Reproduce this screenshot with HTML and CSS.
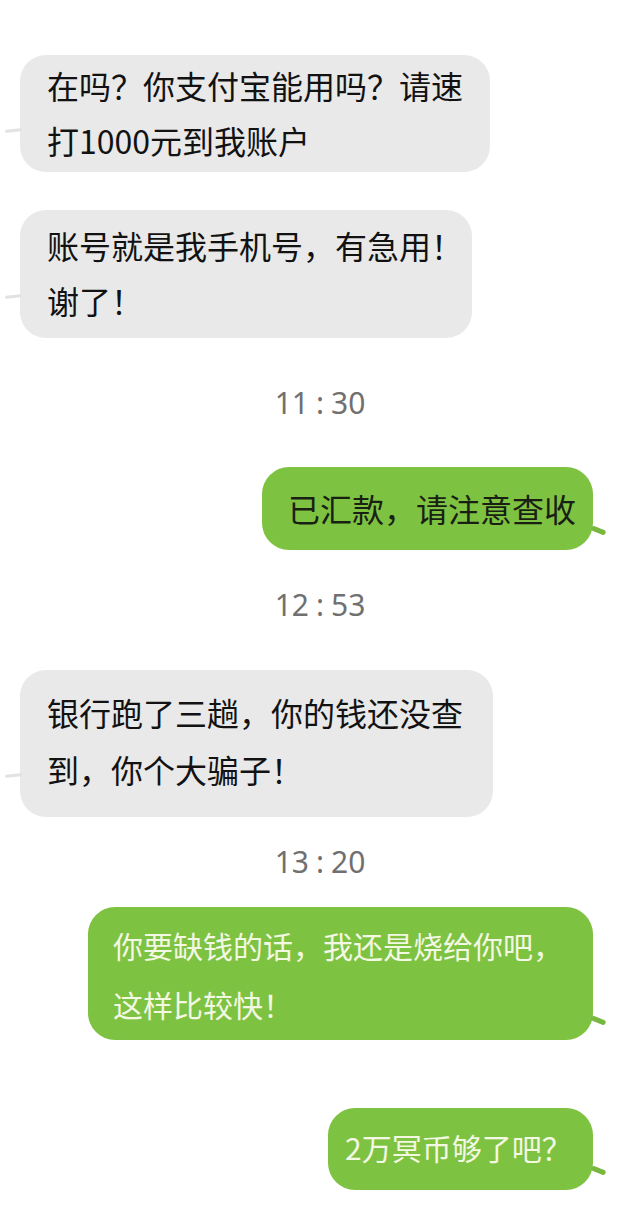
FILE: index.html
```html
<!DOCTYPE html>
<html lang="zh-CN">
<head>
<meta charset="utf-8">
<title>聊天记录</title>
<link rel="stylesheet" href="styles.css">
</head>
<body>
<main class="chat">
  <div class="msg in b1">在吗？你支付宝能用吗？请速<br>打1000元到我账户</div>
  <div class="msg in b2">账号就是我手机号，有急用！<br>谢了！</div>
  <div class="time t1">11<span class="colon">:</span>30</div>
  <div class="msg out dark g1">已汇款，请注意查收</div>
  <div class="time t2">12<span class="colon">:</span>53</div>
  <div class="msg in b3">银行跑了三趟，你的钱还没查<br>到，你个大骗子！</div>
  <div class="time t3">13<span class="colon">:</span>20</div>
  <div class="msg out light g2">你要缺钱的话，我还是烧给你吧，<br>这样比较快！</div>
  <div class="msg out light g3">2万冥币够了吧？</div>
</main>
</body>
</html>
```

FILE: styles.css
```css
html, body {
  margin: 0;
  padding: 0;
  background: #ffffff;
}

.chat {
  width: 640px;
  height: 1231px;
  display: flex;
  flex-direction: column;
  align-items: flex-start;
  font-family: "Noto Sans CJK SC", "Noto Sans", sans-serif;
  box-sizing: border-box;
  padding-top: 55px;
}

.msg {
  position: relative;
  box-sizing: border-box;
  font-size: 32px;
  line-height: 55px;
  white-space: nowrap;
}

.msg.in {
  margin-left: 20px;
  background: #e9e9e9;
  color: #121212;
  border-radius: 26px;
  padding-left: 27px;
}

.msg.in::before {
  content: "";
  position: absolute;
  left: -15px;
  bottom: 40px;
  width: 17px;
  height: 3px;
  border-radius: 2px;
  background: #e2e2e2;
  transform: rotate(-6deg);
}

.msg.out {
  align-self: flex-end;
  margin-right: 47px;
  background: #7ec242;
  border-radius: 27px;
}

.msg.out::after {
  content: "";
  position: absolute;
  right: -13px;
  bottom: 17px;
  width: 15px;
  height: 5px;
  border-radius: 3px;
  background: #78b83f;
  transform: rotate(22deg);
}

.msg.dark {
  color: #1a1f14;
}

.msg.light {
  color: #f3f8e2;
  font-size: 30px;
}

.b1 {
  width: 470px;
  padding-top: 3px;
  padding-bottom: 4px;
}

.b2 {
  margin-top: 38px;
  width: 452px;
  padding-top: 8px;
  padding-bottom: 10px;
}

.b2::before {
  bottom: 22px;
}

.b3 {
  margin-top: 45px;
  width: 473px;
  line-height: 57px;
  padding-top: 14px;
  padding-bottom: 19px;
}

.b3::before {
  bottom: 24px;
  transform: rotate(-22deg);
}

.g1 {
  margin-top: 44px;
  width: 331px;
  padding: 14px 0 14px 26px;
}

.g2 {
  margin-top: 25px;
  margin-right: 50px;
  width: 505px;
  line-height: 59px;
  padding: 9px 0 6px 25px;
}

.g2::after {
  bottom: 32px;
}

.g3 {
  margin-top: 68px;
  margin-right: 47px;
  width: 265px;
  padding: 12px 0 15px 17px;
}

.g3::after {
  bottom: 26px;
}

.time {
  align-self: center;
  font-family: "Noto Sans", "Open Sans", sans-serif;
  font-size: 30px;
  line-height: 40px;
  color: #707070;
}

.colon {
  margin: 0 7px;
}

.t1 {
  margin-top: 45px;
}

.t2 {
  margin-top: 35px;
}

.t3 {
  margin-top: 25px;
}

.t1 + .msg {
  margin-top: 44px;
}

.t2 + .msg {
  margin-top: 45px;
}

.t3 + .msg {
  margin-top: 25px;
}
```
